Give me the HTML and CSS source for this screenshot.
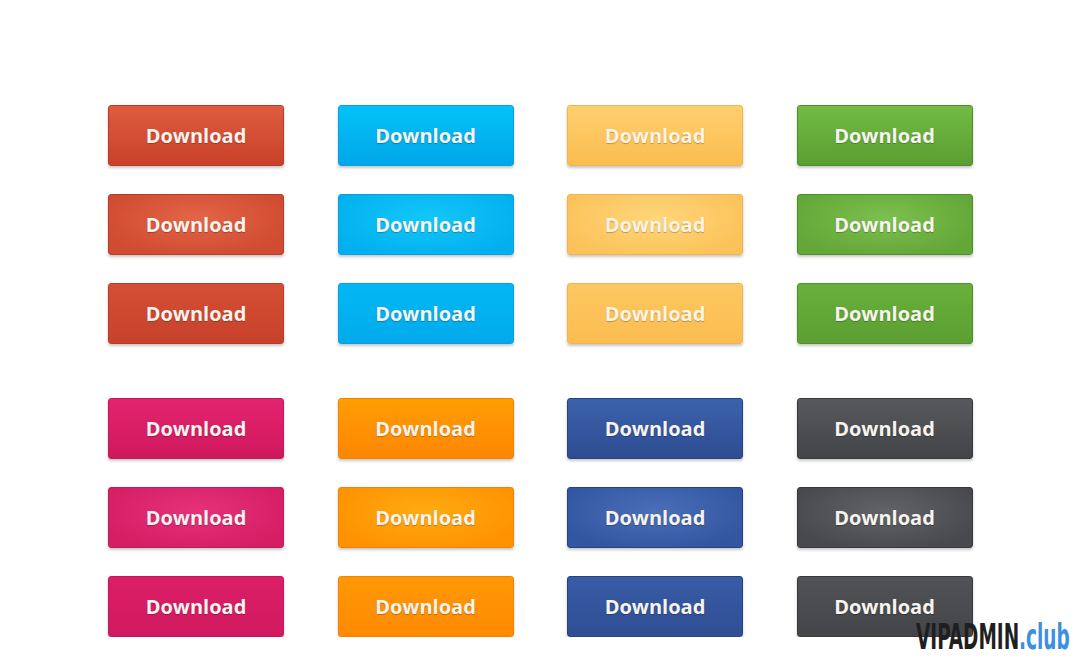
FILE: index.html
```html
<!DOCTYPE html>
<html lang="en">
<head>
  <meta charset="UTF-8" />
  <meta name="viewport" content="width=device-width, initial-scale=1.0" />
  <title>Download buttons</title>
  <link rel="stylesheet" href="styles.css">
</head>
<body>

  <div class="sheet">
    <!-- первая группа -->
    <div class="group">
      <a class="btn red">Download</a>
      <a class="btn blue">Download</a>
      <a class="btn yellow">Download</a>
      <a class="btn green">Download</a>

      <a class="btn red hover">Download</a>
      <a class="btn blue hover">Download</a>
      <a class="btn yellow hover">Download</a>
      <a class="btn green hover">Download</a>

      <a class="btn red flat">Download</a>
      <a class="btn blue flat">Download</a>
      <a class="btn yellow flat">Download</a>
      <a class="btn green flat">Download</a>
    </div>

    <!-- вторая группа -->
    <div class="group">
      <a class="btn pink">Download</a>
      <a class="btn orange">Download</a>
      <a class="btn navy">Download</a>
      <a class="btn dark">Download</a>

      <a class="btn pink hover">Download</a>
      <a class="btn orange hover">Download</a>
      <a class="btn navy hover">Download</a>
      <a class="btn dark hover">Download</a>

      <a class="btn pink flat">Download</a>
      <a class="btn orange flat">Download</a>
      <a class="btn navy flat">Download</a>
      <a class="btn dark flat">Download</a>
    </div>
  </div>

  <div class="watermark">VIPADMIN<span>.club</span></div>

</body>
</html>
```

FILE: styles.css
```css
body {
  margin: 0;
  padding: 0;
  background-color: #ffffff;
  font-family: 'Open Sans', 'Liberation Sans', sans-serif;
}

.sheet {
  padding: 105px 0 0 108px;
  display: flex;
  flex-direction: column;
  gap: 54px;
}

.group {
  display: grid;
  grid-template-columns: repeat(4, 176px);
  grid-auto-rows: 61px;
  column-gap: 53.5px;
  row-gap: 28px;
}

.btn {
  display: flex;
  justify-content: center;
  align-items: center;
  box-sizing: border-box;
  border-radius: 3px;
  border: 1px solid;
  font-size: 20px;
  font-weight: bold;
  color: #f7f3ee;
  text-shadow: 0 1px 1px rgba(0, 0, 0, 0.25);
  box-shadow: 0 2px 3px rgba(0, 0, 0, 0.22);
  cursor: pointer;
}

/* красные */
.red {
  background: linear-gradient(#df5c3e, #c8412b);
  border-color: #bb3c26;
}
.red.hover {
  background: radial-gradient(ellipse at 50% 40%, #e46547, #cf4b31 80%);
}
.red.flat {
  background: linear-gradient(#d44f35, #c8412b);
}

/* голубые */
.blue {
  background: linear-gradient(#04c2f7, #00a6ea);
  border-color: #0aa0dd;
}
.blue.hover {
  background: radial-gradient(ellipse at 50% 40%, #12c8f8, #02b0ef 80%);
}
.blue.flat {
  background: linear-gradient(#02b8f4, #02aaec);
}

/* жёлтые */
.yellow {
  background: linear-gradient(#ffcf6f, #fbbd4f);
  border-color: #f0b54f;
  color: #fff4e2;
}
.yellow.hover {
  background: radial-gradient(ellipse at 50% 40%, #ffd67b, #fcc259 80%);
}
.yellow.flat {
  background: linear-gradient(#fec762, #fbbd50);
}

/* зелёные */
.green {
  background: linear-gradient(#72bb45, #5a9e31);
  border-color: #4e8f2b;
}
.green.hover {
  background: radial-gradient(ellipse at 50% 40%, #7cc14f, #62a737 80%);
}
.green.flat {
  background: linear-gradient(#68b03c, #5b9f32);
}

/* розовые */
.pink {
  background: linear-gradient(#e3246f, #cf185c);
  border-color: #c4185a;
}
.pink.hover {
  background: radial-gradient(ellipse at 50% 40%, #e63079, #d51e64 80%);
}
.pink.flat {
  background: linear-gradient(#dc1e66, #d01a60);
}

/* оранжевые */
.orange {
  background: linear-gradient(#ff9d05, #ff8600);
  border-color: #f08400;
}
.orange.hover {
  background: radial-gradient(ellipse at 50% 40%, #ffab12, #ff9200 80%);
}
.orange.flat {
  background: linear-gradient(#ff9806, #ff8a02);
}

/* синие */
.navy {
  background: linear-gradient(#3c62ad, #2e4c91);
  border-color: #28427f;
}
.navy.hover {
  background: radial-gradient(ellipse at 50% 40%, #4a6fb8, #3356a0 80%);
}
.navy.flat {
  background: linear-gradient(#385ca6, #2f4e94);
}

/* тёмные */
.dark {
  background: linear-gradient(#58595d, #434447);
  border-color: #38393c;
}
.dark.hover {
  background: radial-gradient(ellipse at 50% 40%, #626367, #48494c 80%);
}
.dark.flat {
  background: linear-gradient(#515256, #444548);
}

.watermark {
  position: absolute;
  right: 10px;
  top: 619px;
  font-family: 'Liberation Sans Narrow', 'DejaVu Sans Condensed', sans-serif;
  font-size: 36px;
  font-weight: bold;
  line-height: 1;
  color: #1f1f1f;
  transform: scaleX(0.57);
  transform-origin: right center;
}

.watermark span {
  color: #3d8fe3;
}
```
